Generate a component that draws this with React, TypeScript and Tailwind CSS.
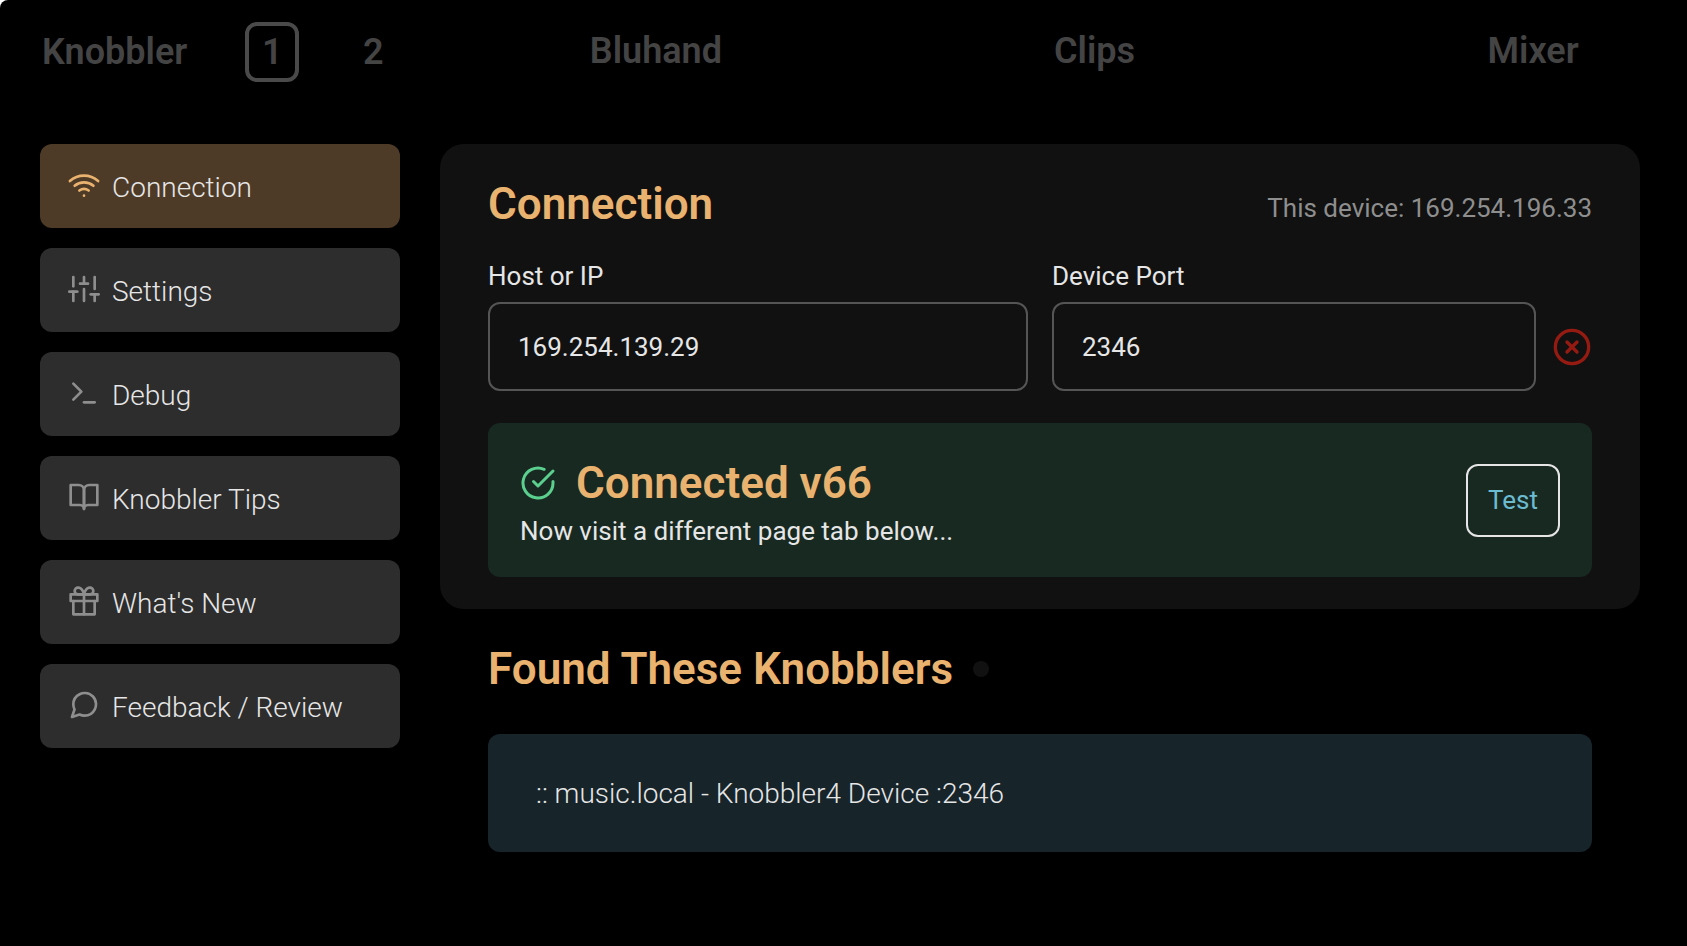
import { useState } from "react";
import type { IconType } from "react-icons";
import {
  FiBookOpen,
  FiCheckCircle,
  FiGift,
  FiMessageCircle,
  FiSliders,
  FiTerminal,
  FiWifi,
  FiXCircle,
} from "react-icons/fi";
import clsx from "clsx";

// ─── Data ─────────────────────────────────────────────────────────
const MENU: { label: string; icon: IconType }[] = [
  { label: "Connection", icon: FiWifi },
  { label: "Settings", icon: FiSliders },
  { label: "Debug", icon: FiTerminal },
  { label: "Knobbler Tips", icon: FiBookOpen },
  { label: "What's New", icon: FiGift },
  { label: "Feedback / Review", icon: FiMessageCircle },
];

const TABS = ["Bluhand", "Clips", "Mixer"];

// ─── TopNav ───────────────────────────────────────────────────────
function TopNav() {
  const [page, setPage] = useState(1);

  return (
    <nav className="flex overflow-hidden pt-[22px] text-4xl font-semibold text-[#444]">
      <div className="flex w-[26%] shrink-0 items-center pl-[42px]">
        <button className="mr-[58px]">Knobbler</button>
        {[1, 2].map((n) => (
          <button
            key={n}
            onClick={() => setPage(n)}
            className={clsx(
              "mr-[47px] flex h-15 w-[54px] shrink-0 items-center justify-center rounded-xl border-4",
              page === n ? "border-[#4a4a4a]" : "border-transparent"
            )}
          >
            {n}
          </button>
        ))}
      </div>
      {TABS.map((tab) => (
        <button key={tab} className="h-15 w-[26%] shrink-0 pr-1 pb-0.5">
          {tab}
        </button>
      ))}
    </nav>
  );
}

// ─── Sidebar ──────────────────────────────────────────────────────
function Sidebar() {
  const [active, setActive] = useState("Connection");

  return (
    <aside className="flex w-90 shrink-0 flex-col gap-5">
      {MENU.map(({ label, icon: Icon }) => (
        <button
          key={label}
          onClick={() => setActive(label)}
          className={clsx(
            "flex h-21 items-center gap-3 rounded-xl px-7 text-[28px] font-light text-[#e6e6e6]",
            active === label ? "bg-[#4e3b27]" : "bg-[#2d2d2d]"
          )}
        >
          <Icon
            size={32}
            className={clsx(
              "mb-0.5",
              active === label ? "text-[#e9b26f]" : "text-[#8e8e8e]"
            )}
          />
          <span className="pt-1">{label}</span>
        </button>
      ))}
    </aside>
  );
}

// ─── Field ────────────────────────────────────────────────────────
function Field({
  id,
  label,
  value,
  onChange,
}: {
  id: string;
  label: string;
  value: string;
  onChange: (value: string) => void;
}) {
  return (
    <>
      <label htmlFor={id} className="text-[26px] leading-8">
        {label}
      </label>
      <input
        id={id}
        value={value}
        onChange={(e) => onChange(e.target.value)}
        className="mt-2.5 h-[89px] w-full rounded-xl border-2 border-[#555] bg-transparent px-7 text-[26px] outline-none"
      />
    </>
  );
}

// ─── ConnectionPanel ──────────────────────────────────────────────
function ConnectionPanel() {
  const [host, setHost] = useState("169.254.139.29");
  const [port, setPort] = useState("2346");

  return (
    <section className="rounded-3xl bg-[#111] px-12 py-8 text-[#e6e6e6]">
      <div className="flex items-end justify-between">
        <h2 className="text-[44px] leading-14 font-semibold text-[#e9b26f]">
          Connection
        </h2>
        <p className="text-[26px] leading-12 text-[#8e8e8e]">
          This device: 169.254.196.33
        </p>
      </div>

      <form className="mt-7 flex items-end">
        <div className="flex flex-[540] flex-col">
          <Field id="host" label="Host or IP" value={host} onChange={setHost} />
        </div>
        <div className="ml-6 flex flex-[484] flex-col">
          <Field id="port" label="Device Port" value={port} onChange={setPort} />
        </div>
        <button
          type="button"
          aria-label="Clear"
          onClick={() => {
            setHost("");
            setPort("");
          }}
          className="ml-4 flex h-[89px] items-center text-[#951b12]"
        >
          <FiXCircle size={40} />
        </button>
      </form>

      <div className="mt-8 flex items-center justify-between rounded-xl bg-[#182922] p-8">
        <div>
          <div className="flex items-center gap-5">
            <FiCheckCircle size={36} className="text-[#5bd08e]" />
            <h2 className="text-[44px] leading-14 font-semibold text-[#e9b26f]">
              Connected v66
            </h2>
          </div>
          <p className="mt-1.5 text-[26px] leading-7">
            Now visit a different page tab below...
          </p>
        </div>
        <button className="h-[73px] rounded-xl border-2 border-[#e6e6e6] px-5 text-[26px] text-[#6bbcd1]">
          Test
        </button>
      </div>
    </section>
  );
}

// ─── FoundDevices ─────────────────────────────────────────────────
function FoundDevices() {
  return (
    <section className="px-12 pt-8">
      <div className="flex items-center gap-5">
        <h2 className="text-[44px] leading-14 font-semibold text-[#e9b26f]">
          Found These Knobblers
        </h2>
        <span className="size-4 rounded-full bg-[#111]" />
      </div>
      <button className="mt-[37px] block w-full rounded-xl bg-[#17242a] px-12 pt-10 pb-[38px] text-left text-[28px] leading-10 font-light text-[#e6e6e6]">
        :: music.local - Knobbler4 Device :2346
      </button>
    </section>
  );
}

// ─── App ──────────────────────────────────────────────────────────
export default function App() {
  return (
    <div className="bg-white">
      <div className="min-h-screen rounded-tl-lg bg-black font-['Roboto',sans-serif]">
        <TopNav />
        <main className="mt-[62px] flex gap-10 pr-[47px] pl-10">
          <Sidebar />
          <div className="min-w-0 flex-1">
            <ConnectionPanel />
            <FoundDevices />
          </div>
        </main>
      </div>
    </div>
  );
}
